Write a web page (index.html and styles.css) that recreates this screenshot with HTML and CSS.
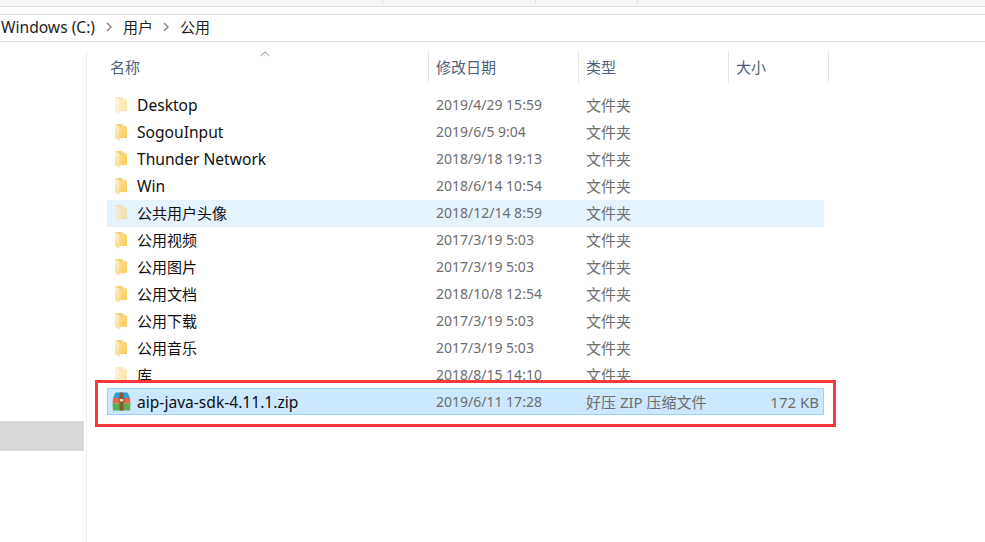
FILE: index.html
```html
<!DOCTYPE html>
<html lang="zh-CN">
<head>
<meta charset="utf-8">
<title>公用</title>
<link rel="stylesheet" href="styles.css">
</head>
<body>
<svg class="defs" width="0" height="0" aria-hidden="true">
  <defs>
    <linearGradient id="fy" x1="0" y1="0" x2="1" y2="1"><stop offset="0" stop-color="#fde08c"/><stop offset="1" stop-color="#f8cb5e"/></linearGradient>
    <linearGradient id="fl" x1="0" y1="0" x2="0" y2="1"><stop offset="0" stop-color="#fff2c8"/><stop offset="1" stop-color="#fbdc8e"/></linearGradient>
    <symbol id="folder" viewBox="0 0 12 17">
      <path d="M0 0h7.500v3H12V14H4v-2H0z" fill="#f3cf76"/>
      <path d="M0 0L4.500 3V17L0 14z" fill="url(#fl)"/>
      <path d="M4.500 4H7.500V0.500L12 3V14H4.500z" fill="url(#fy)"/>
    </symbol>
  </defs>
</svg>
<div class="ribbon"><i class="tick t1"></i><i class="tick t2"></i><i class="tick t3"></i></div>
<div class="gap"></div>
<nav class="crumbs">
  <span class="lat">Windows (C:)</span>
  <svg class="chev" viewBox="0 0 6 10"><path d="M1 1l4 4-4 4" fill="none" stroke="#8a8a8a" stroke-width="1.500"/></svg>
  <span>用户</span>
  <svg class="chev chev-next" viewBox="0 0 6 10"><path d="M1 1l4 4-4 4" fill="none" stroke="#8a8a8a" stroke-width="1.500"/></svg>
  <span>公用</span>
</nav>
<main class="body">
  <aside class="side"><div class="side-sel"></div></aside>
  <section class="list">
    <div class="head">
      <div class="hc hname">名称<svg class="sort" viewBox="0 0 10 6"><path d="M0.500 5L5 0.800 9.500 5" fill="none" stroke="#8a8a8a"/></svg></div>
      <div class="hc hdate">修改日期</div>
      <div class="hc htype">类型</div>
      <div class="hc hsize">大小</div>
    </div>
    <div class="row"><svg class="ico faded"><use href="#folder"/></svg><span class="n lat">Desktop</span><span class="d">2019/4/29 15:59</span><span class="t">文件夹</span><span class="s"></span></div>
    <div class="row"><svg class="ico"><use href="#folder"/></svg><span class="n lat">SogouInput</span><span class="d">2019/6/5 9:04</span><span class="t">文件夹</span><span class="s"></span></div>
    <div class="row"><svg class="ico"><use href="#folder"/></svg><span class="n lat">Thunder Network</span><span class="d">2018/9/18 19:13</span><span class="t">文件夹</span><span class="s"></span></div>
    <div class="row"><svg class="ico"><use href="#folder"/></svg><span class="n lat">Win</span><span class="d">2018/6/14 10:54</span><span class="t">文件夹</span><span class="s"></span></div>
    <div class="row hover"><svg class="ico faded"><use href="#folder"/></svg><span class="n">公共用户头像</span><span class="d">2018/12/14 8:59</span><span class="t">文件夹</span><span class="s"></span></div>
    <div class="row"><svg class="ico"><use href="#folder"/></svg><span class="n">公用视频</span><span class="d">2017/3/19 5:03</span><span class="t">文件夹</span><span class="s"></span></div>
    <div class="row"><svg class="ico"><use href="#folder"/></svg><span class="n">公用图片</span><span class="d">2017/3/19 5:03</span><span class="t">文件夹</span><span class="s"></span></div>
    <div class="row"><svg class="ico"><use href="#folder"/></svg><span class="n">公用文档</span><span class="d">2018/10/8 12:54</span><span class="t">文件夹</span><span class="s"></span></div>
    <div class="row"><svg class="ico"><use href="#folder"/></svg><span class="n">公用下载</span><span class="d">2017/3/19 5:03</span><span class="t">文件夹</span><span class="s"></span></div>
    <div class="row"><svg class="ico"><use href="#folder"/></svg><span class="n">公用音乐</span><span class="d">2017/3/19 5:03</span><span class="t">文件夹</span><span class="s"></span></div>
    <div class="row"><svg class="ico faded"><use href="#folder"/></svg><span class="n">库</span><span class="d">2018/8/15 14:10</span><span class="t">文件夹</span><span class="s"></span></div>
    <div class="row selected">
      <svg class="zip" viewBox="0 0 19 19">
        <path d="M3.500 0.500h12L18 6H1z" fill="#2f9fd8"/>
        <path d="M1 6h17l0.500 5.500H0.500z" fill="#e8693f"/>
        <path d="M0.500 11.500h18L18 18.500H1z" fill="#5cae4a"/>
        <path d="M7.500 0.500h4v18h-4z" fill="#8a5a33"/>
        <path d="M7.200 6.500h4.600v3.500H7.200z" fill="#e9dcc0" stroke="#6b4526" stroke-width="0.800"/>
      </svg>
      <span class="n lat">aip-java-sdk-4.11.1.zip</span><span class="d">2019/6/11 17:28</span><span class="t">好压 ZIP 压缩文件</span><span class="s">172 KB</span>
    </div>
  </section>
  <div class="mark" aria-hidden="true"></div>
</main>
</body>
</html>
```

FILE: styles.css
```css
* { box-sizing: border-box; }
html, body { margin: 0; height: 542px; overflow: hidden; background: #fff; }
body { font-family: "Noto Sans", "Noto Sans CJK SC", sans-serif; font-size: 15px; color: #1a1a1a; position: relative; }
.defs { position: absolute; }
.ribbon { height: 7px; background: #f4f5f7; border-bottom: 1px solid #dcdcdc; position: relative; }
.tick { position: absolute; top: 0; height: 3px; width: 1px; background: #dcdcdc; }
.t1 { left: 382px; } .t2 { left: 535px; } .t3 { left: 637px; }
.gap { height: 8px; border-bottom: 1px solid #dcdcdc; }
.crumbs { height: 27px; border-bottom: 1px solid #d9d9d9; display: flex; align-items: center; padding: 0 0 2px 1px; line-height: 24px; font-size: 15px; color: #1f1f1f; }
.lat { font-size: 15.6px; }
.chev { width: 6px; height: 10px; margin: 0 11px 0 11px; flex: none; }
.chev-next { margin-left: 10px; }
.body { display: flex; position: relative; height: 500px; }
.side { width: 87px; margin-top: 9px; border-right: 1px solid #f0f0f0; padding-top: 370px; flex: none; }
.side-sel { width: 84px; height: 30px; background: #d9d9d9; }
.list { padding-left: 20px; width: 737px; margin-top: 9px; flex: none; }
.head { display: grid; grid-template-columns: 322px 150px 150px 100px; height: 32px; margin-bottom: 9px; }
.hc { position: relative; padding: 6px 0 0 7px; color: #4c607a; font-size: 15px; line-height: 20px; border-right: 1px solid #e5e5e5; }
.hname { padding-left: 3px; }
.sort { position: absolute; left: 153px; top: 0; width: 10px; height: 6px; }
.row { display: grid; grid-template-columns: 30px 292px 150px 150px 95px; height: 27px; align-items: center; width: 717px; }
.row .ico { width: 12px; height: 17px; margin-left: 8px; margin-top: -1px; }
.faded { opacity: 0.5; }
.n { color: #0f0f0f; white-space: nowrap; padding-bottom: 2px; }
.d, .t, .s { color: #6d6d6d; padding: 0 0 2px 7px; white-space: nowrap; }
.d { font-size: 14px; }
.t, .s { font-size: 15px; }
.s { text-align: right; padding: 0 5px 2px 0; }
.hover { background: #e5f3ff; }
.selected { background: #cce8ff; outline: 1px solid #99d1ff; outline-offset: -1px; margin-top: -1px; }
.selected .n, .selected .d, .selected .t, .selected .s { padding-bottom: 0; }
.zip { width: 19px; height: 19px; margin-left: 5px; }
.mark { position: absolute; left: 95px; top: 338px; width: 741px; height: 47px; border: 3px solid #f93a3a; pointer-events: none; }
```
